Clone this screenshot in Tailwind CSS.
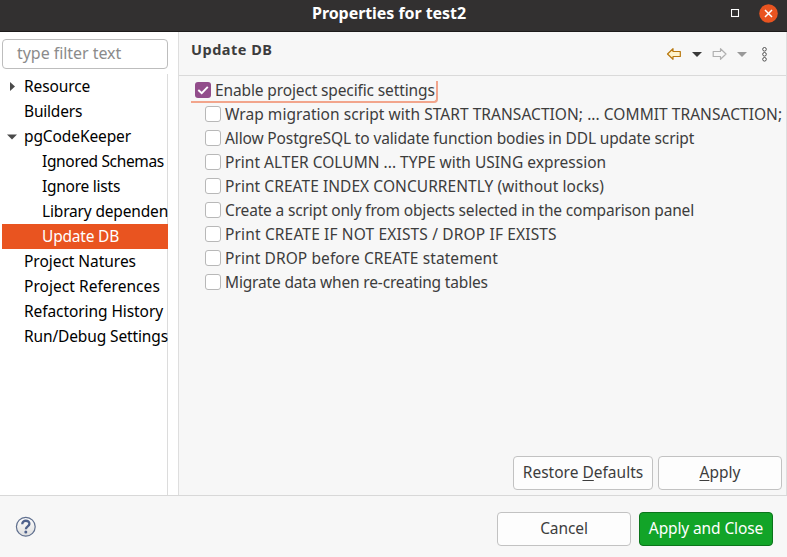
<!DOCTYPE html>
<html lang="en">
<head>
<meta charset="utf-8">
<title>Properties for test2</title>
<script src="https://cdn.jsdelivr.net/npm/@tailwindcss/browser@4"></script>
</head>
<body class="w-[787px] h-[557px] overflow-hidden bg-[#f7f7f7] text-[15.5px] text-[#3d3d3d] whitespace-nowrap font-['Noto_Sans',sans-serif] flex flex-col">
<header class="relative h-8 shrink-0 bg-[#323030] border-b border-[#1d1b1b] flex items-center justify-end pr-[9px]">
  <h1 class="absolute left-[312px] top-0 h-[27px] leading-[27px] text-white font-bold text-base tracking-[-0.06px]">Properties for test2</h1>
  <svg class="mb-[5px] mr-[19px]" width="9" height="9"><rect x=".5" y=".5" width="7" height="7" fill="none" stroke="#fff" stroke-width="1.1"/></svg>
  <svg class="mb-[5px]" width="19" height="19" viewBox="0 0 19 19"><circle cx="9.5" cy="9.5" r="9.3" fill="#e95420"/><path d="M6 6l7 7M13 6l-7 7" stroke="#fff" stroke-width="1.5"/></svg>
</header>

<div class="h-[463px] shrink-0 flex">
  <nav class="w-[178px] shrink-0 bg-white pl-[2px] pt-[7px] pr-[10px] text-black flex flex-col">
    <div class="h-[30px] shrink-0 border border-[#bdbdbd] rounded-[4px] pl-[14px] leading-[27px] text-base text-[#8b8b8b] tracking-[-0.05px]">type filter text</div>
    <ul class="mt-[5px] flex-1 bg-linear-to-l from-[#dcdcdc] from-[1px] to-white to-[1px] leading-[25px]">
      <li class="h-[25px] flex items-center"><svg class="w-[22px] h-[11px]" viewBox="0 0 22 11"><path d="M8 1l5 4.500-5 4.500z" fill="#4a4a4a"/></svg><span class="tracking-[-0.12px]">Resource</span></li>
      <li class="h-[25px] pl-[22px] tracking-[-0.2px]">Builders</li>
      <li class="h-[25px] flex items-center"><svg class="w-[22px] h-[11px]" viewBox="0 0 22 11"><path d="M5 3.500h10l-5 5z" fill="#4a4a4a"/></svg><span class="tracking-[-0.1px]">pgCodeKeeper</span></li>
      <li class="h-[25px] pl-10 tracking-[-0.34px]">Ignored Schemas</li>
      <li class="h-[25px] pl-10 tracking-[-0.25px]">Ignore lists</li>
      <li class="h-[25px] pl-10 tracking-[-0.17px]">Library dependen</li>
      <li class="h-[25px] pl-10 tracking-[-0.2px] bg-[#e95420] text-white">Update DB</li>
      <li class="h-[25px] pl-[22px] tracking-[-0.04px]">Project Natures</li>
      <li class="h-[25px] pl-[22px] tracking-[0.04px]">Project References</li>
      <li class="h-[25px] pl-[22px] tracking-[-0.08px]">Refactoring History</li>
      <li class="h-[25px] pl-[22px] tracking-[-0.13px]">Run/Debug Settings</li>
    </ul>
  </nav>

  <main class="flex-1 min-w-0 border-l border-r border-l-[#dedede] border-r-[#dedede] flex flex-col">
    <div class="h-11 shrink-0 border-b border-[#dadada] flex pl-3 pr-[14px] justify-between">
      <h2 class="h-[35px] leading-[35px] font-bold text-[14.5px] tracking-[0.5px]">Update DB</h2>
      <div class="h-11 flex items-center">
        <svg width="106" height="18" viewBox="0 0 106 18">
          <path d="M1.500 9L7 3.700V6.500h7.300v5H7v2.800z" fill="#fff4cc" stroke="#b8780f" stroke-width="1.200" stroke-linejoin="round"/>
          <path d="M26 7h10l-5 5z" fill="#3a3a3a"/>
          <path d="M60 9l-5.500-5.300V6.500h-7.300v5h7.300v2.800z" fill="#f7f7f7" stroke="#b0b0b0" stroke-width="1.200" stroke-linejoin="round"/>
          <path d="M71 7h10l-5 5z" fill="#999"/>
          <g fill="#fff" stroke="#4d4d4d"><circle cx="98.500" cy="4.300" r="1.800"/><circle cx="98.500" cy="9.300" r="1.800"/><circle cx="98.500" cy="14.300" r="1.800"/></g>
        </svg>
      </div>
    </div>

    <ul class="pt-[2px] leading-6">
      <li class="h-6 pl-3 flex items-start"><div class="mt-[3px] h-[22px] w-[247px] shrink-0 border-r-2 border-b-2 border-[#f2a58c] rounded-br-[4px] flex items-start pl-1">
        <svg class="mr-1 mt-px shrink-0" width="16" height="16"><rect width="16" height="16" rx="3" fill="#924d8b"/><path d="M3.300 8l3.400 3.200 6.100-6.400" fill="none" stroke="#fff" stroke-width="1.900"/></svg>
        <span class="-mt-[3px] tracking-[-0.13px]">Enable project specific settings</span>
      </div></li>
      <li class="h-6 pl-[26px] flex items-center gap-1"><i class="size-4 shrink-0 bg-white border border-[#b8b8b8] rounded-[3px]"></i><span class="tracking-[0.05px]">Wrap migration script with START TRANSACTION; ... COMMIT TRANSACTION;</span></li>
      <li class="h-6 pl-[26px] flex items-center gap-1"><i class="size-4 shrink-0 bg-white border border-[#b8b8b8] rounded-[3px]"></i><span class="tracking-[-0.135px]">Allow PostgreSQL to validate function bodies in DDL update script</span></li>
      <li class="h-6 pl-[26px] flex items-center gap-1"><i class="size-4 shrink-0 bg-white border border-[#b8b8b8] rounded-[3px]"></i><span class="tracking-[0.01px]">Print ALTER COLUMN ... TYPE with USING expression</span></li>
      <li class="h-6 pl-[26px] flex items-center gap-1"><i class="size-4 shrink-0 bg-white border border-[#b8b8b8] rounded-[3px]"></i><span class="tracking-[0.06px]">Print CREATE INDEX CONCURRENTLY (without locks)</span></li>
      <li class="h-6 pl-[26px] flex items-center gap-1"><i class="size-4 shrink-0 bg-white border border-[#b8b8b8] rounded-[3px]"></i><span class="tracking-[-0.165px]">Create a script only from objects selected in the comparison panel</span></li>
      <li class="h-6 pl-[26px] flex items-center gap-1"><i class="size-4 shrink-0 bg-white border border-[#b8b8b8] rounded-[3px]"></i><span class="tracking-[0.15px]">Print CREATE IF NOT EXISTS / DROP IF EXISTS</span></li>
      <li class="h-6 pl-[26px] flex items-center gap-1"><i class="size-4 shrink-0 bg-white border border-[#b8b8b8] rounded-[3px]"></i><span class="tracking-[0.09px]">Print DROP before CREATE statement</span></li>
      <li class="h-6 pl-[26px] flex items-center gap-1"><i class="size-4 shrink-0 bg-white border border-[#b8b8b8] rounded-[3px]"></i><span class="tracking-[-0.17px]">Migrate data when re-creating tables</span></li>
    </ul>

    <div class="mt-auto mb-[5px] mr-1 flex justify-end gap-[5px] leading-[31px]">
      <button class="w-[140px] h-[34px] pb-px bg-[#fdfdfd] border border-[#c2c2c2] rounded-[4px] tracking-[0px]">Restore <u class="underline-offset-2">D</u>efaults</button>
      <button class="w-[124px] h-[34px] pb-px bg-[#fdfdfd] border border-[#c2c2c2] rounded-[4px] tracking-[0.05px]"><u class="underline-offset-2">A</u>pply</button>
    </div>
  </main>
</div>

<footer class="flex-1 border-t border-[#d8d8d8] flex items-start pt-4 pl-[15px] pr-[14px]">
  <svg class="mt-1" width="21" height="21" viewBox="0 0 21 21"><defs><linearGradient id="g" x1="0" y1="0" x2="0" y2="1"><stop offset="0" stop-color="#fff"/><stop offset="1" stop-color="#dedede"/></linearGradient></defs><circle cx="10.800" cy="10.700" r="9.400" fill="url(#g)" stroke="#60708f" stroke-width="1.200"/><path d="M7.300 8.200C7 3.600 14.600 3.700 14.400 7.900c-.1 2.500-3.500 2.400-3.500 5.300" fill="none" stroke="#4e618b" stroke-width="2.300"/><circle cx="10.800" cy="16" r="1.500" fill="#4e618b"/></svg>
  <button class="ml-auto w-[134px] h-[34px] pb-0.5 leading-[30px] bg-[#fdfdfd] border border-[#c2c2c2] rounded-[4px] tracking-[-0.1px]">Cancel</button>
  <button class="ml-2 w-[134px] h-[34px] pb-0.5 leading-[30px] bg-[#12a428] border border-[#0b741b] rounded-[4px] text-white tracking-[-0.12px]">Apply and Close</button>
</footer>
</body>
</html>
